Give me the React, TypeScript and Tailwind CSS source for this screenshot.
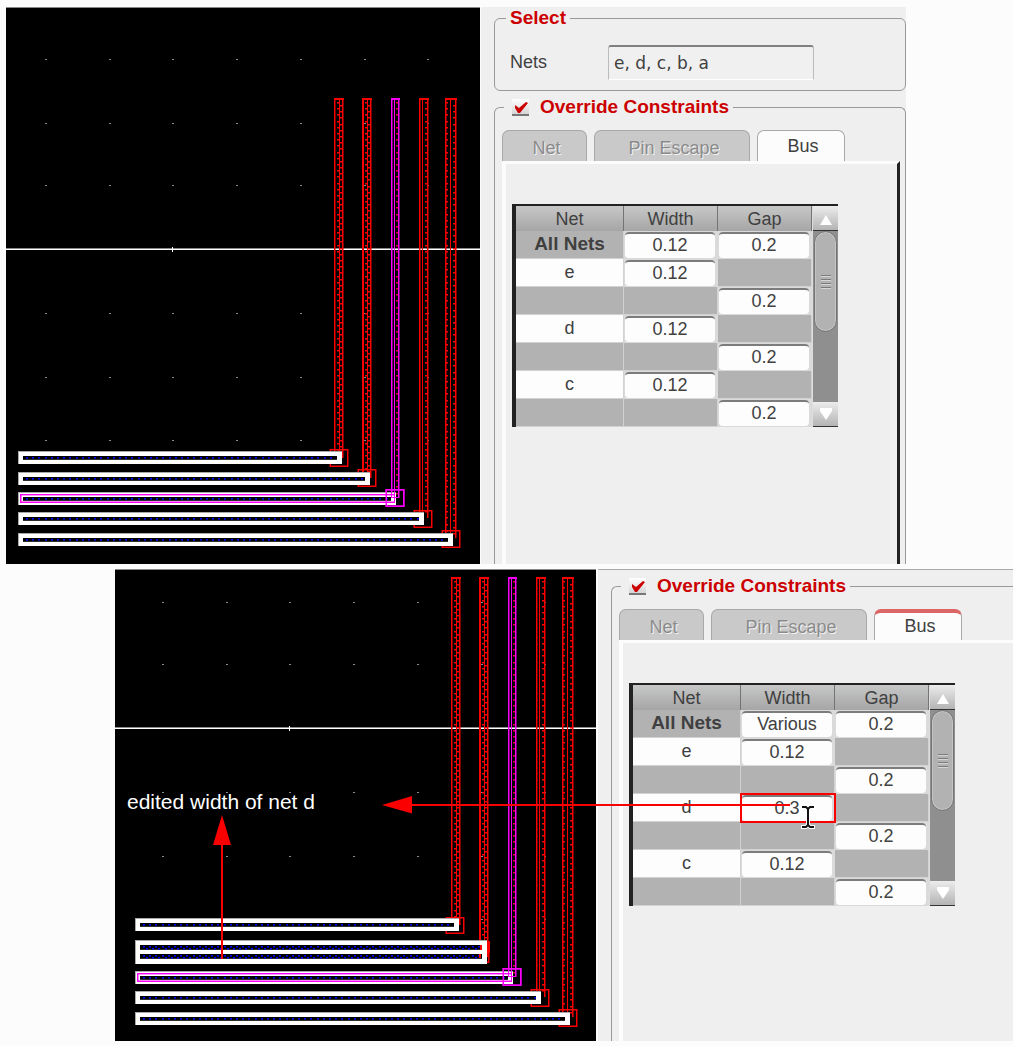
import React from "react";

type Line = { x: number; heavy?: boolean };
type Net = {
  name: string;
  color: string;
  lines: Line[];
  ticks: [number, number][];
  end: number;
  via: [number, number, number, number];
  bar: [number, number, number];
  wide?: boolean;
};

const RED = "#fa0000";
const MAGENTA = "#fa00fa";

const baseNets: Net[] = [
  { name: "e", color: RED, lines: [{ x: 334 }, { x: 339 }, { x: 342 }], ticks: [[337, 2], [340, 2]], end: 458, via: [330, 449, 18, 18], bar: [451, 342, 13] },
  { name: "d", color: RED, lines: [{ x: 362, heavy: true }, { x: 367 }, { x: 370 }], ticks: [[365, 2], [368, 2]], end: 478, via: [358, 469, 18, 18], bar: [472, 370, 13] },
  { name: "c", color: MAGENTA, lines: [{ x: 391 }, { x: 394 }, { x: 398 }], ticks: [[396, 2]], end: 498, via: [386, 489, 18, 18], bar: [492, 396, 13] },
  { name: "b", color: RED, lines: [{ x: 419 }, { x: 422 }, { x: 427 }], ticks: [[425, 2]], end: 518, via: [414, 510, 18, 18], bar: [512, 424, 13] },
  { name: "a", color: RED, lines: [{ x: 445 }, { x: 450 }, { x: 455 }], ticks: [[446, 2], [453, 2]], end: 538, via: [442, 530, 18, 18], bar: [533, 453, 13] },
];

const editedNets: Net[] = baseNets.map((n) => {
  if (n.name === "e") return { ...n, end: 446, via: [329, 438, 18, 17], bar: [439, 342, 13] };
  if (n.name === "d") return { ...n, end: 478, via: [353, 463, 19, 21], bar: [461, 370, 24], wide: true };
  return n;
});

const dotCols = [45, 109, 172, 236, 300, 364, 427];
const dotRows = [59, 123, 185, 313, 377, 440];

function steps(from: number, to: number): number[] {
  const out: number[] = [];
  for (let i = 0; from + i * 6.2 < to - 2; i++) out.push(Math.round(from + i * 6.2));
  return out;
}

function Frame({ x, y, w, h, fill }: { x: number; y: number; w: number; h: number; fill: string }) {
  return (
    <g fill={fill}>
      <rect x={x} y={y} width={w} height={1} />
      <rect x={x} y={y + h - 1} width={w} height={1} />
      <rect x={x} y={y} width={1} height={h} />
      <rect x={x + w - 1} y={y} width={1} height={h} />
      <rect x={x} y={y + 1} width={w} height={1} opacity={0.5} />
      <rect x={x} y={y + h - 2} width={w} height={1} opacity={0.5} />
      <rect x={x - 1} y={y} width={1} height={h} opacity={0.5} />
      <rect x={x + w} y={y} width={1} height={h} opacity={0.5} />
    </g>
  );
}

function Trace({ net }: { net: Net }) {
  const tick = net.color === MAGENTA ? "#e00040" : net.color;
  const length = net.end - 98;
  return (
    <g fill={net.color}>
      <rect x={net.lines[0].x} y={98} width={net.lines[2].x - net.lines[0].x + 2} height={2} />
      {net.lines.map((l) => (
        <rect key={l.x} x={l.x} y={98} width={l.heavy ? 2 : 1} height={length} />
      ))}
      <rect x={net.lines[2].x + 1} y={98} width={1} height={length} opacity={0.5} />
      <rect x={net.lines[0].x + 1} y={98} width={1} height={length} opacity={0.5} />
      {net.ticks.map(([x, w], i) =>
        steps(102 + i * 3, net.end).map((y) => (
          <React.Fragment key={`${x}-${y}`}>
            <rect x={x} y={y} width={w} height={1} fill={tick} />
            <rect x={x} y={y + 1} width={w} height={1} fill={tick} opacity={0.5} />
          </React.Fragment>
        )),
      )}
      <Frame x={net.via[0]} y={net.via[1]} w={net.via[2]} h={net.via[3]} fill={net.color} />
    </g>
  );
}

function BlueDots({ from, to, y }: { from: number; to: number; y: number }) {
  return (
    <>
      {steps(from, to).map((x) => (
        <g key={x} fill="#0000fa">
          <rect x={x} y={y} width={2} height={1} />
          <rect x={x} y={y + 1} width={2} height={1} opacity={0.6} />
        </g>
      ))}
    </>
  );
}

function Bar({ net }: { net: Net }) {
  const [y, right, h] = net.bar;
  const innerEnd = right - 5;
  const slots = net.wide ? [y + 5, y + 14] : [y + 5];
  const slotH = net.wide ? 5 : 4;
  return (
    <g>
      <rect x={18} y={y} width={right - 18} height={h} fill="#fff" />
      <rect x={18} y={y} width={right - 18} height={1} fill="#aaa" />
      <rect x={18} y={y} width={1} height={h} fill="#aaa" />
      {slots.map((sy) => (
        <g key={sy}>
          <rect x={23} y={sy} width={innerEnd - 23} height={slotH} fill="#000" />
          <rect x={23} y={sy + slotH - 1} width={innerEnd - 23} height={1} fill="#303030" />
          <BlueDots from={26} to={innerEnd} y={sy + 1} />
          {net.wide && <BlueDots from={29} to={innerEnd} y={sy + 3} />}
        </g>
      ))}
      {net.wide && (
        <g fill={RED}>
          <rect x={363} y={466} width={2} height={5} />
          <rect x={362} y={475} width={2} height={4} />
          <rect x={370} y={462} width={3} height={12} />
        </g>
      )}
      {net.color === MAGENTA && (
        <g fill={MAGENTA}>
          <rect x={20} y={y + 2} width={right - 22} height={1} />
          <rect x={20} y={y + 10} width={right - 22} height={1} />
          <rect x={20} y={y + 2} width={1} height={9} />
          <rect x={20} y={y + 3} width={right - 22} height={1} opacity={0.4} />
          <rect x={20} y={y + 9} width={right - 22} height={1} opacity={0.5} />
          <rect x={21} y={y + 2} width={1} height={9} opacity={0.5} />
          <rect x={391} y={y - 3} width={1} height={9} />
          <rect x={394} y={y - 3} width={1} height={14} />
          <rect x={398} y={y - 3} width={1} height={9} />
          <rect x={391} y={y + 5} width={8} height={1} />
          <Frame x={net.via[0]} y={net.via[1]} w={18} h={18} fill={MAGENTA} />
        </g>
      )}
    </g>
  );
}

function LayoutDrawing({ nets, edited = false }: { nets: Net[]; edited?: boolean }) {
  return (
    <svg
      className={edited ? "block h-[472px] w-[481px] shrink-0 bg-black" : "block h-[557px] w-[474px] shrink-0 bg-black"}
      viewBox={edited ? "-2 90 481 472" : "6 7 474 557"}
      shapeRendering="crispEdges"
      role="img"
      aria-label="Bus routing layout"
    >
      <rect x={-2} y={edited ? 90 : 7} width={482} height={1} fill="#888" />
      {dotRows.map((y) => dotCols.map((x) => <rect key={`${x}-${y}`} x={x} y={y} width={2} height={1} fill="#8a8a8a" />))}
      <rect x={-2} y={248} width={482} height={1} fill="#8a8a8a" />
      <rect x={-2} y={249} width={482} height={1} fill="#fff" />
      <rect x={172} y={247} width={1} height={5} fill="#fff" />
      {nets.map((n) => <Trace key={n.name} net={n} />)}
      {nets.map((n) => <Bar key={n.name} net={n} />)}
    </svg>
  );
}

type Row = { net: string; width?: string; gap?: string; marked?: boolean };

const rowsFor = (all: string, d: string, marked: boolean): Row[] => [
  { net: "All Nets", width: all, gap: "0.2" },
  { net: "e", width: "0.12" },
  { net: "", gap: "0.2" },
  { net: "d", width: d, marked },
  { net: "", gap: "0.2" },
  { net: "c", width: "0.12" },
  { net: "", gap: "0.2" },
];

function ValueCell({ value, label, marked }: { value?: string; label: string; marked?: boolean }) {
  if (value === undefined) {
    return <td className="border-r border-b border-[#d2d2d2] bg-[#b3b2b3] p-0" />;
  }
  return (
    <td className="bg-[#dadada] p-0">
      <div className={marked ? "relative h-[28px] p-px pr-[3px] outline-2 -outline-offset-1 outline-[#fa0000]" : "h-[28px] p-px pr-[3px]"}>
        <input
          aria-label={label}
          defaultValue={value}
          className="block h-[26px] w-full rounded-[4px] border-t-2 border-[#7c7c7c] bg-[#fdfdfd] pb-px text-center text-[18px] text-[#404040] outline-none"
        />
      </div>
    </td>
  );
}

function ConstraintTable({ rows }: { rows: Row[] }) {
  const head = "border-r border-[#747474] bg-linear-to-b from-[#c6c8c6] to-[#a6a5a7] p-0 font-normal";
  return (
    <div className="flex w-[326px] border-t-2 border-l-4 border-[#222] bg-[#8f8f8f]">
      <table className="w-[296px] table-fixed border-separate border-spacing-0 text-center text-[18px] leading-[22px] text-[#404040]">
        <thead>
          <tr className="h-[25px]">
            <th className={`${head} w-[108px]`}>Net</th>
            <th className={head}>Width</th>
            <th className={head}>Gap</th>
          </tr>
        </thead>
        <tbody>
          {rows.map((r, i) => (
            <tr key={i} className="h-[28px]">
              {i === 0 ? (
                <th className="border-r border-b border-[#d2d2d2] bg-[#b3b2b3] p-0 pb-[2px] text-[19px] font-bold">{r.net}</th>
              ) : (
                <td className={r.net ? "border-r border-b border-[#d2d2d2] bg-[#fdfdfd] p-0 pb-[2px]" : "border-r border-b border-[#d2d2d2] bg-[#b3b2b3] p-0"}>{r.net}</td>
              )}
              <ValueCell value={r.width} label={`${r.net} width`} marked={r.marked} />
              <ValueCell value={r.gap} label={`Gap ${i}`} />
            </tr>
          ))}
        </tbody>
      </table>
      <div className="flex flex-1 flex-col border-l border-[#ddd]">
        <button aria-label="Scroll up" className="flex h-[25px] items-center justify-center border-b border-[#333] bg-linear-to-b from-[#ececec] to-[#b4b4b4] pt-1">
          <svg width="14" height="10" viewBox="0 0 14 10"><path d="M7 0L13 10H1Z" fill="#fff" /></svg>
        </button>
        <div className="flex-1 px-px">
          <div className="flex h-[101px] flex-col items-center justify-center gap-[2px] rounded-full border border-[#757575] bg-[#b2b2b2] shadow-[inset_0_0_0_1px_#c4c4c4]">
            {[0, 1, 2, 3].map((n) => <span key={n} className="h-[2px] w-[10px] border-t border-b border-t-[#7b7b7b] border-b-[#d5d5d5]" />)}
          </div>
        </div>
        <button aria-label="Scroll down" className="flex h-[25px] items-center justify-center border-b border-[#333] bg-linear-to-b from-[#ececec] to-[#b4b4b4]">
          <svg width="14" height="12" viewBox="0 0 14 12"><path d="M1 0H13V3L7 12L1 3Z" fill="#fff" /></svg>
        </button>
      </div>
    </div>
  );
}

function OverrideConstraints({ rows, edited = false }: { rows: Row[]; edited?: boolean }) {
  const disabledTab =
    "h-[31px] rounded-t-[7px] border border-b-0 border-[#a8a8a8] bg-[#c9c9c9] pt-1 pl-1 text-[#8b8b8b] [text-shadow:1px_1px_0_#f4f4f4]";
  return (
    <fieldset
      className={
        edited
          ? "flex min-w-0 flex-1 flex-col rounded-tl-[6px] border-t border-l border-[#999] pt-3 pl-[7px]"
          : "flex min-w-0 flex-1 flex-col rounded-t-[6px] border border-b-0 border-[#999] pt-3 pr-[5px] pl-[7px]"
      }
    >
      <legend className="ml-[2px] pr-1 pl-2">
        <label className="flex h-[22px] items-center gap-[11px] text-[19px] font-bold text-[#cc0000]">
          <span className="relative flex size-[17px]">
            <input type="checkbox" defaultChecked className="size-[17px] appearance-none border-b-2 border-[#777] bg-linear-to-b from-white to-[#d5d5d5]" />
            <svg className="pointer-events-none absolute inset-0" width="17" height="17" viewBox="0 0 17 17">
              <path d="M3 6L7 9L14 3L16 4L8 14H6L3 9Z" fill="#cc0000" />
            </svg>
          </span>
          Override Constraints
        </label>
      </legend>
      <div role="tablist" className="flex gap-[7px] text-[18px] leading-[22px]">
        <button role="tab" disabled className={`${disabledTab} w-[85px]`}>Net</button>
        <button role="tab" disabled className={`${disabledTab} w-[156px]`}>Pin Escape</button>
        <button
          role="tab"
          aria-selected="true"
          className={
            edited
              ? "h-[31px] w-[88px] rounded-t-[7px] border border-t-4 border-b-0 border-[#a8a8a8] border-t-[#dc6666] bg-[#fcfcfc] pb-px pl-1 text-[#404040]"
              : "h-[31px] w-[88px] rounded-t-[7px] border border-b-0 border-[#a8a8a8] bg-[#fcfcfc] pl-1 text-[#404040]"
          }
        >
          Bus
        </button>
      </div>
      <div
        className={
          edited
            ? "flex-1 border-t-3 border-l-4 border-[#fcfcfc] pt-10 pl-[6px]"
            : "flex-1 border-t-3 border-r-3 border-l-4 border-[#fcfcfc] border-r-[#222] pt-10 pl-[6px]"
        }
      >
        <ConstraintTable rows={rows} />
      </div>
    </fieldset>
  );
}

function Annotations() {
  return (
    <>
      <p className="absolute top-[221px] left-3 text-[21px] leading-6 text-white">edited width of net d</p>
      <svg className="pointer-events-none absolute top-0 left-0" width="720" height="472" viewBox="115 569 720 472" aria-hidden="true">
        <g fill="#fa0000">
          <rect x="410" y="804" width="380" height="2" />
          <path d="M382 805L412 796V813.500Z" />
          <rect x="221" y="843" width="2" height="116" />
          <path d="M222 815L231 845H213Z" />
        </g>
        <g fill="none" strokeLinecap="square">
          <path d="M803 807H806L808 809L810 807H813M808 809V825M803 827H806L808 825L810 827H813" stroke="#fff" strokeWidth="4" />
          <path d="M803 807H806L808 809L810 807H813M808 809V825M803 827H806L808 825L810 827H813" stroke="#111" strokeWidth="2" />
        </g>
      </svg>
    </>
  );
}

export default function App() {
  return (
    <main className="min-h-screen overflow-hidden bg-[#fcfcfc] pt-[7px] pb-[5px] pl-[6px] font-['Liberation_Sans',Arial,sans-serif]">
      <section className="mr-[107px] flex h-[557px]">
        <LayoutDrawing nets={baseNets} />
        <form className="flex min-w-0 flex-1 flex-col gap-[5px] overflow-hidden border-l border-[#fcfcfc] bg-[#efefef] pl-[13px]">
          <fieldset className="min-w-0 rounded-[6px] border border-[#999] pt-4 pb-[10px] pl-[15px]">
            <legend className="-ml-1 h-[22px] px-1 text-[19px] leading-[22px] font-bold text-[#cc0000]">Select</legend>
            <div className="flex items-center">
              <label htmlFor="nets" className="w-[98px] text-[18px] text-[#404040]">Nets</label>
              <input
                id="nets"
                defaultValue="e, d, c, b, a"
                className="h-[35px] w-[206px] rounded-t-[3px] border border-t-2 border-[#bbb] border-t-[#808080] border-b-white bg-[#f0f0f0] px-[5px] font-['DejaVu_Sans',sans-serif] text-[17px] text-[#404040] outline-none"
              />
            </div>
          </fieldset>
          <OverrideConstraints rows={rowsFor("0.12", "0.12", false)} />
        </form>
      </section>
      <section className="relative mt-[5px] ml-[109px] flex h-[472px]">
        <LayoutDrawing nets={editedNets} edited />
        <form className="ml-[2px] flex min-w-0 flex-1 flex-col overflow-hidden border-t border-[#aaa] bg-[#efefef] pt-[5px] pl-[13px]">
          <OverrideConstraints rows={rowsFor("Various", "0.3", true)} edited />
        </form>
        <Annotations />
      </section>
    </main>
  );
}
